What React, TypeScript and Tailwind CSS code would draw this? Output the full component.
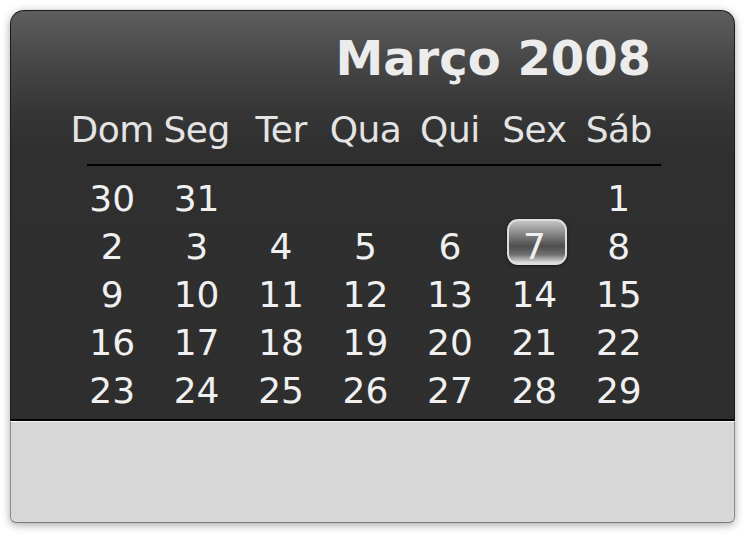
import React from "react";

const headers = ["Dom", "Seg", "Ter", "Qua", "Qui", "Sex", "Sáb"];
const days: (number | null)[] = [
  30, 31, null, null, null, null, 1,
  2, 3, 4, 5, 6, 7, 8,
  9, 10, 11, 12, 13, 14, 15,
  16, 17, 18, 19, 20, 21, 22,
  23, 24, 25, 26, 27, 28, 29,
];

export default function App() {
  return (
    <div className="w-[751px] h-[540px] bg-white pt-[10px] pl-[10px]" style={{ fontFamily: '"DejaVu Sans", sans-serif' }}>
      <div className="w-[725px] flex flex-col rounded-t-[14px] rounded-b-[6px] shadow-[0_2px_8px_rgba(0,0,0,0.35)]">
        <div className="h-[409px] flex flex-col rounded-t-[14px] border-x border-t border-[#1c1c1c] bg-[linear-gradient(to_bottom,#5e5e5e_0px,#474747_50px,#363636_100px,#2f2f2f_140px,#2e2e2e_100%)] pt-[23px]">
          <div className="flex justify-end pr-[83px]">
            <span className="text-[48px] leading-[48px] font-bold text-[#ececec]">Março 2008</span>
          </div>
          <div className="mt-[30px] ml-[59px] w-[591px] grid grid-cols-7">
            {headers.map((h) => (
              <span key={h} className="text-center text-[36px] leading-[36px] text-[#e4e4e4] tracking-[-0.5px]">{h}</span>
            ))}
          </div>
          <div className="mt-[16px] ml-[76px] w-[574px] h-[2px] bg-black" />
          <div className="mt-[9px] ml-[59px] w-[591px] grid grid-cols-7">
            {days.map((d, i) => (
              <div key={i} className="relative h-[48px] flex justify-center">
                {d === 7 && (
                  <span className="absolute left-[15px] top-[-4px] w-[60px] h-[46px] rounded-[11px] border-2 border-[#dedede] bg-[linear-gradient(to_bottom,#c4c4c4_0%,#9c9c9c_20%,#6a6a6a_45%,#4e4e4e_60%,#707070_80%,#e2e2e2_100%)] shadow-[0_1px_3px_rgba(0,0,0,0.6)]" />
                )}
                <span className="relative text-[36px] leading-[48px] text-[#f0f0f0]">{d ?? ""}</span>
              </div>
            ))}
          </div>
        </div>
        <div className="h-[2px] bg-black border-x border-[#1c1c1c]" />
        <div className="h-[102px] bg-[#d7d7d7] border-t border-t-[#f6f6f6] border-x border-x-[#8c8c8c] border-b border-b-[#7d7d7d] rounded-b-[6px]" />
      </div>
    </div>
  );
}
